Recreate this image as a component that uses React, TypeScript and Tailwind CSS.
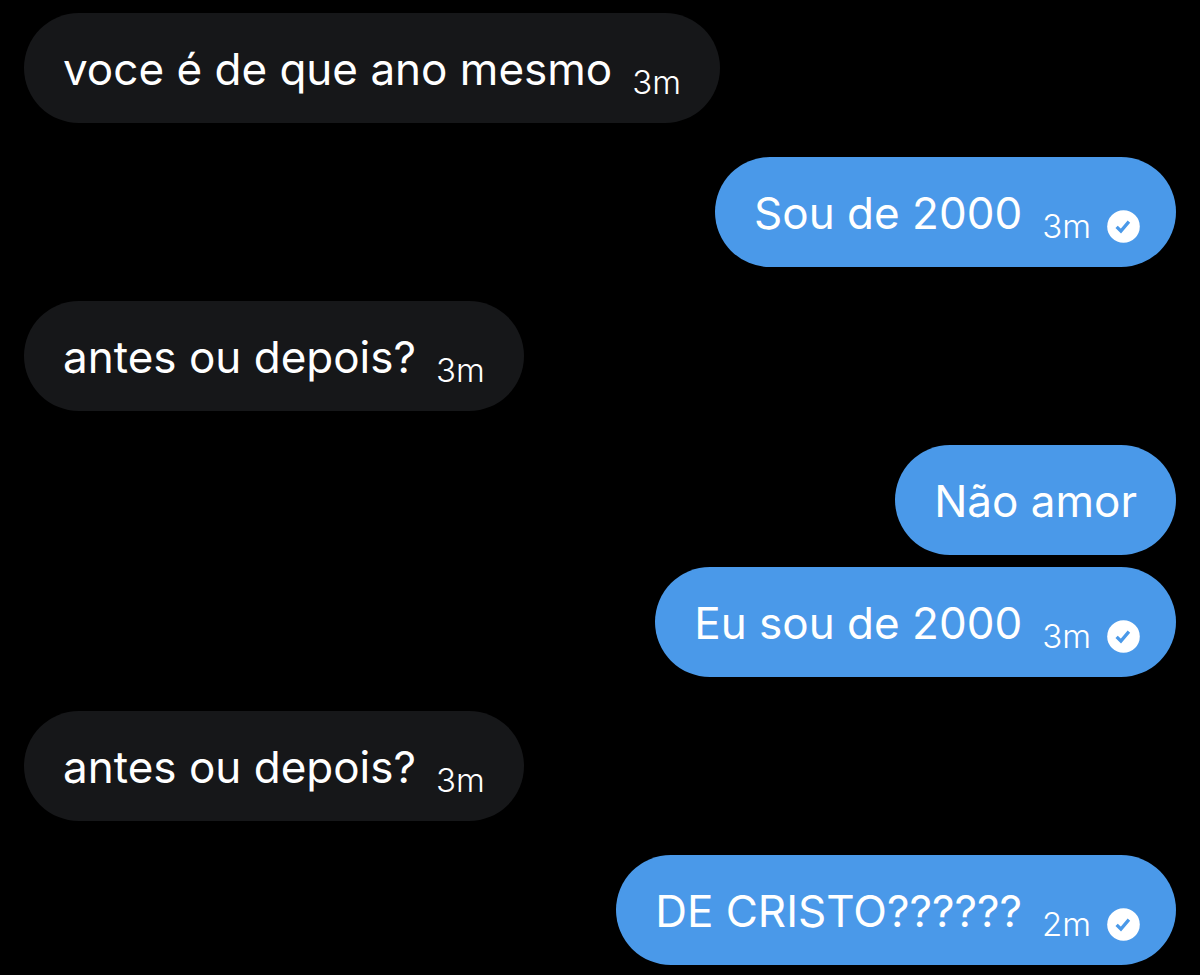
type Message = {
  id: number;
  text: string;
  time?: string;
  mine?: boolean;
  grouped?: boolean;
};

const messages: Message[] = [
  { id: 1, text: "voce é de que ano mesmo", time: "3m" },
  { id: 2, text: "Sou de 2000", time: "3m", mine: true },
  { id: 3, text: "antes ou depois?", time: "3m" },
  { id: 4, text: "Não amor", mine: true },
  { id: 5, text: "Eu sou de 2000", time: "3m", mine: true, grouped: true },
  { id: 6, text: "antes ou depois?", time: "3m" },
  { id: 7, text: "DE CRISTO??????", time: "2m", mine: true },
];

function SentIcon() {
  return (
    <svg className="-mr-[3px] ml-4 size-[33px]" viewBox="0 0 33 33" fill="none" aria-hidden="true">
      <circle cx="16.5" cy="16.5" r="16.3" fill="#fff" />
      <path d="M9.6 16.9l4.3 4.1 8-9.4" stroke="#4a99e9" strokeWidth="3.3" />
    </svg>
  );
}

function Bubble({ message }: { message: Message }) {
  const { text, time, mine, grouped } = message;
  return (
    <li
      className={`flex items-center rounded-full px-[39px] pt-7 pb-[26px] text-white ${
        mine ? "self-end bg-[#4a99e9]" : "self-start bg-[#161719]"
      } ${grouped ? "mt-3" : "mt-[34px] first:mt-0"}`}
    >
      <p className="text-[44px] leading-14">{text}</p>
      {time && (
        <div className="ml-5 flex h-14 items-center pt-[26px]">
          <time className="text-[33px] leading-8 font-light">{time}</time>
          {mine && <SentIcon />}
        </div>
      )}
    </li>
  );
}

export default function App() {
  return (
    <main className="min-h-screen bg-black px-6 pt-[13px] font-['Inter',sans-serif]">
      <ul className="flex flex-col">
        {messages.map((message) => (
          <Bubble key={message.id} message={message} />
        ))}
      </ul>
    </main>
  );
}
